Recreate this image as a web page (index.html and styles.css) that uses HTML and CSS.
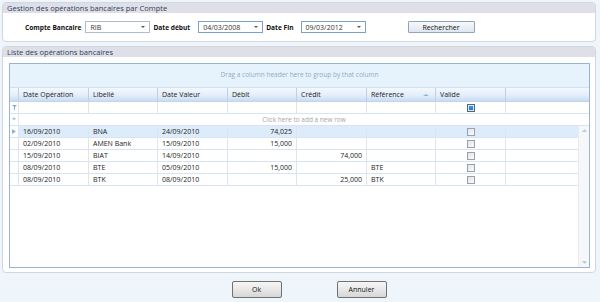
FILE: index.html
```html
<!DOCTYPE html>
<html lang="fr">
<head>
    <meta charset="UTF-8">
    <title>Gestion des opérations bancaires</title>
    <link rel="stylesheet" href="styles.css">
</head>
<body>
    <div class="window">
        <div class="panel panel-search">
            <div class="panel-head">Gestion des opérations bancaires par Compte</div>
            <div class="panel-body search-row">
                <span class="label lbl-compte">Compte Bancaire</span>
                <div class="combo combo-rib"><span>RIB</span><i class="arrow"></i></div>
                <span class="label lbl-debut">Date début</span>
                <div class="combo date"><span>04/03/2008</span><i class="arrow"></i></div>
                <span class="label lbl-fin">Date Fin</span>
                <div class="combo date"><span>09/03/2012</span><i class="arrow"></i></div>
                <button class="btn btn-search">Rechercher</button>
            </div>
        </div>

        <div class="panel panel-list">
            <div class="panel-head">Liste des opérations bancaires</div>
            <div class="panel-body list-body">
                <div class="grid">
                    <div class="group-panel">Drag a column header here to group by that column</div>

                    <div class="row head-row">
                        <div class="cell ind"></div>
                        <div class="cell">Date Opération</div>
                        <div class="cell">Libellé</div>
                        <div class="cell">Date Valeur</div>
                        <div class="cell">Débit</div>
                        <div class="cell">Crédit</div>
                        <div class="cell sort">Référence <i class="sort-arrow"></i></div>
                        <div class="cell">Valide</div>
                        <div class="cell last"></div>
                    </div>

                    <div class="row filter-row">
                        <div class="cell ind">
                            <svg width="5" height="5" viewBox="0 0 5 5"><path d="M0 0H5L3 2V5H2V2Z" fill="#8aa9cf"/></svg>
                        </div>
                        <div class="cell"></div>
                        <div class="cell"></div>
                        <div class="cell"></div>
                        <div class="cell"></div>
                        <div class="cell"></div>
                        <div class="cell"></div>
                        <div class="cell center"><span class="check mixed"></span></div>
                        <div class="cell last"></div>
                    </div>

                    <div class="row new-row">
                        <div class="cell ind"><span class="star">*</span></div>
                        <div class="new-text">Click here to add a new row</div>
                    </div>

                    <div class="data">
                        <div class="rows">
                            <div class="row data-row selected">
                                <div class="cell ind"><svg width="4" height="5" viewBox="0 0 4 5"><path d="M0 0L4 2.5L0 5Z" fill="#9ab1cc"/></svg></div>
                                <div class="cell">16/09/2010</div>
                                <div class="cell">BNA</div>
                                <div class="cell">24/09/2010</div>
                                <div class="cell num">74,025</div>
                                <div class="cell num"></div>
                                <div class="cell"></div>
                                <div class="cell center"><span class="check"></span></div>
                                <div class="cell last"></div>
                            </div>
                            <div class="row data-row">
                                <div class="cell ind"></div>
                                <div class="cell">02/09/2010</div>
                                <div class="cell">AMEN Bank</div>
                                <div class="cell">15/09/2010</div>
                                <div class="cell num">15,000</div>
                                <div class="cell num"></div>
                                <div class="cell"></div>
                                <div class="cell center"><span class="check"></span></div>
                                <div class="cell last"></div>
                            </div>
                            <div class="row data-row">
                                <div class="cell ind"></div>
                                <div class="cell">15/09/2010</div>
                                <div class="cell">BIAT</div>
                                <div class="cell">14/09/2010</div>
                                <div class="cell num"></div>
                                <div class="cell num">74,000</div>
                                <div class="cell"></div>
                                <div class="cell center"><span class="check"></span></div>
                                <div class="cell last"></div>
                            </div>
                            <div class="row data-row">
                                <div class="cell ind"></div>
                                <div class="cell">08/09/2010</div>
                                <div class="cell">BTE</div>
                                <div class="cell">05/09/2010</div>
                                <div class="cell num">15,000</div>
                                <div class="cell num"></div>
                                <div class="cell">BTE</div>
                                <div class="cell center"><span class="check"></span></div>
                                <div class="cell last"></div>
                            </div>
                            <div class="row data-row">
                                <div class="cell ind"></div>
                                <div class="cell">08/09/2010</div>
                                <div class="cell">BTK</div>
                                <div class="cell">08/09/2010</div>
                                <div class="cell num"></div>
                                <div class="cell num">25,000</div>
                                <div class="cell">BTK</div>
                                <div class="cell center"><span class="check"></span></div>
                                <div class="cell last"></div>
                            </div>
                        </div>
                        <div class="vscroll">
                            <svg width="5" height="3" viewBox="0 0 5 3"><path d="M0 3L2.5 0L5 3Z" fill="#c4c8cf"/></svg>
                            <svg width="5" height="3" viewBox="0 0 5 3"><path d="M0 0L2.5 3L5 0Z" fill="#c4c8cf"/></svg>
                        </div>
                    </div>
                </div>
            </div>
        </div>

        <div class="actions">
            <button class="btn btn-action">Ok</button>
            <button class="btn btn-action">Annuler</button>
        </div>
    </div>
</body>
</html>
```

FILE: styles.css
```css
* {
    box-sizing: border-box;
}
body {
    margin: 0;
    background-color: #eef6fb;
    font-family: "Open Sans", "Noto Sans", sans-serif;
    font-size: 7px;
    color: #222;
}
.window {
    width: 600px;
    height: 302px;
    padding: 2px 4px 0 2px;
    display: flex;
    flex-direction: column;
}
.panel {
    border: 1px solid #d3d6dd;
    border-radius: 4px;
    background-color: #fff;
    overflow: hidden;
}
.panel-head {
    height: 10px;
    line-height: 10px;
    padding-left: 4px;
    background-color: #dfe0e7;
    color: #2c3e5c;
    font-size: 7.5px;
}
.panel-search {
    height: 40px;
}
.search-row {
    display: flex;
    align-items: center;
    height: 28px;
    padding-left: 22px;
}
.label {
    font-weight: bold;
    font-size: 6.6px;
    color: #111;
}
.lbl-compte {
    margin-right: 4px;
}
.lbl-debut {
    margin: 0 8px 0 3px;
}
.lbl-fin {
    margin: 0 7px 0 3px;
}
.combo {
    display: flex;
    align-items: center;
    justify-content: space-between;
    width: 65px;
    height: 12px;
    padding: 0 4px;
    border: 1px solid #aebdd1;
    background-color: #fff;
    color: #333;
}
.combo.date {
    border-color: #7d9fcd;
}
.arrow {
    width: 0;
    height: 0;
    border-left: 2px solid transparent;
    border-right: 2px solid transparent;
    border-top: 2px solid #555;
}
.btn {
    font-family: inherit;
    font-size: 7px;
    color: #111;
    padding: 0;
    cursor: pointer;
}
.btn-search {
    margin-left: 42px;
    width: 67px;
    height: 12px;
    border: 1px solid #90a4bf;
    border-radius: 1px;
    background: linear-gradient(#f8f9fb, #dfe6ef);
}
.panel-list {
    margin-top: 4px;
    height: 227px;
}
.list-body {
    padding: 6px 5px 4px 6px;
}
.grid {
    height: 205px;
    border: 1px solid #99b3d8;
    display: flex;
    flex-direction: column;
}
.group-panel {
    height: 24px;
    line-height: 22px;
    text-align: center;
    background-color: #e7f3fc;
    border-bottom: 1px solid #cfe0f1;
    color: #8eabc8;
    font-size: 6.5px;
}
.row {
    display: grid;
    grid-template-columns: 9px 70px 69px 70px 69px 70px 69px 70px 1fr;
}
.cell {
    display: flex;
    align-items: center;
    padding: 0 4px;
    border-right: 1px solid #dce6f1;
    white-space: nowrap;
    overflow: hidden;
}
.cell.last {
    border-right: none;
}
.cell.ind {
    padding: 0;
    justify-content: center;
}
.cell.num {
    justify-content: flex-end;
}
.cell.center {
    justify-content: center;
}
.head-row {
    height: 14px;
    background: linear-gradient(#f3f8fd 0%, #e4eefa 55%, #c8dcf3 100%);
    border-bottom: 1px solid #c3d5ea;
    color: #222;
}
.head-row .cell {
    border-right-color: #bcd0e8;
}
.sort {
    justify-content: space-between;
}
.sort-arrow {
    width: 0;
    height: 0;
    border-left: 3px solid transparent;
    border-right: 3px solid transparent;
    border-bottom: 2px solid #8fb4dd;
    margin-right: 2px;
}
.filter-row {
    height: 12px;
    border-bottom: 1px solid #d8e4f1;
}
.new-row {
    height: 12px;
    border-bottom: 1px solid #d8e4f1;
    grid-template-columns: 9px 1fr;
}
.new-text {
    text-align: center;
    line-height: 11px;
    color: #a6a6a6;
    font-size: 6.5px;
}
.star {
    color: #8aa9cf;
    font-size: 7px;
    line-height: 7px;
}
.data {
    flex: 1;
    display: flex;
}
.rows {
    flex: 1;
}
.data-row {
    height: 12px;
    border-bottom: 1px solid #d8e4f1;
}
.data-row.selected {
    background-color: #dcecfb;
}
.data-row .cell.ind {
    background-color: #fff;
}
.vscroll {
    width: 11px;
    background-color: #f6f7f8;
    border-left: 1px solid #e8eaed;
    display: flex;
    flex-direction: column;
    justify-content: space-between;
    align-items: center;
    padding: 3px 0 3px;
}
.check {
    width: 8px;
    height: 8px;
    border: 1px solid #9aa0a8;
    background: linear-gradient(135deg, #e2e4e7, #fbfbfc);
}
.check.mixed {
    background: linear-gradient(#4d9ee8, #1f6fc7);
    box-shadow: inset 0 0 0 1px #d7e6f5;
    border-color: #56677c;
}
.actions {
    display: flex;
    justify-content: center;
    gap: 55px;
    margin-top: 8px;
    padding-left: 20px;
}
.btn-action {
    width: 50px;
    height: 17px;
    border: 1px solid #707070;
    border-radius: 2px;
    background: linear-gradient(#f6f6f6 0%, #e8e8e8 50%, #d6d6d6 100%);
}
```
